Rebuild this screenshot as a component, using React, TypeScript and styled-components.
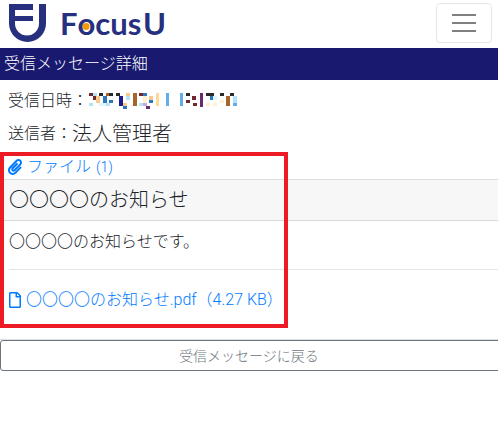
import React from "react";
import styled, { createGlobalStyle } from "styled-components";
import { FaPaperclip, FaRegFile } from "react-icons/fa";

const Global = createGlobalStyle`
  html, body { margin: 0; padding: 0; background: #fff; overflow: hidden; }
  body { font-family: Roboto, "Noto Sans CJK JP", sans-serif; font-weight: 300; font-size: 16px; line-height: 24px; color: #212529; }
`;
const Page = styled.div`position: relative; width: 498px; height: 427px; overflow: hidden;`;
const NavBar = styled.header`height: 48px; display: flex; align-items: flex-start; justify-content: space-between; padding: 3px 6px 0 9px; box-sizing: border-box;`;
const Brand = styled.div`display: flex; align-items: flex-start; gap: 14px;`;
const LogoMark = styled.svg`width: 37px; height: 40px; display: block;`;
const LogoText = styled.span`font-family: Lato, sans-serif; font-weight: 700; font-size: 31px; line-height: 40px; color: #26307f; word-spacing: -6px; white-space: nowrap;`;
const LogoO = styled.span`
  position: relative; display: inline-block;
  &::after { content: ""; position: absolute; width: 7px; height: 7px; border-radius: 50%; background: #f39800; left: 50%; top: 20px; transform: translateX(-50%); }
`;
const Toggler = styled.button`width: 56px; height: 40px; padding: 0; border: 1px solid #e6e6e6; border-radius: 4px; background: transparent; display: flex; flex-direction: column; align-items: center; justify-content: center; gap: 6px;`;
const Bar = styled.span`width: 24px; height: 2px; background: #808080;`;
const TitleBar = styled.h1`margin: 0 0 4px; height: 32px; background: #191970; color: #fff; font-size: 16px; font-weight: 300; line-height: 32px; padding-left: 4px;`;
const Meta = styled.div`display: flex; align-items: center; height: 33px; padding-left: 8px; white-space: nowrap;`;
const Large = styled.span`font-size: 20px;`;
const Mosaic = styled.svg`width: 150px; height: 20px; margin: 2px 0 0 1px; display: block; shape-rendering: crispEdges;`;
const AttachLink = styled.a`display: flex; align-items: center; height: 24px; padding-left: 8px; margin-top: 5px; color: #007bff; white-space: nowrap; svg { width: 14px; height: 16px; margin-right: 5px; }`;
const Count = styled.span`font-size: 14px; margin-left: 5px;`;
const Card = styled.section`width: 510px; border-top: 1px solid rgba(0,0,0,.125); border-bottom: 1px solid rgba(0,0,0,.125);`;
const CardHead = styled.div`height: 40px; background: #f7f7f7; border-bottom: 1px solid rgba(0,0,0,.125); padding-left: 9px; font-size: 20px; line-height: 40px;`;
const CardBody = styled.div`padding: 8px 9px 0; height: 118px; box-sizing: border-box;`;
const BodyText = styled.p`margin: 0; height: 40px; line-height: 26px;`;
const Rule = styled.hr`border: 0; border-top: 1px solid rgba(0,0,0,.1); margin: 0 0 18px;`;
const FileLink = styled.a`display: flex; align-items: center; color: #007bff; white-space: nowrap; svg { width: 12px; height: 16px; margin-right: 5px; }`;
const BackButton = styled.button`display: block; width: 510px; height: 31px; margin: 0; padding: 0 12px 0 0; border: 1px solid #6c757d; border-radius: 3px; background: #fff; color: #6c757d; font: inherit; font-size: 14px; text-align: center;`;
const Highlight = styled.div`position: absolute; left: 0; top: 152px; width: 288px; height: 176px; box-sizing: border-box; border: 4px solid #ed1c24; pointer-events: none;`;

const C = { dk: "#2b2b2b", mr: "#73262c", lb: "#b4e2f8", br: "#a8652a", pc: "#f8c88e", bl: "#2a78c0", nv: "#1c1c8c", cr: "#ffd898", sk: "#62aee8", pu: "#6a2a70", pl: "#fff0d0", pb: "#e0f4fc" };
const cells: [number, number, string][] = [
  [89,0,C.mr],[93,0,C.lb],[99,0,C.dk],[106,0,C.br],[109,0,C.dk],[116,0,C.dk],[126,0,C.pc],[133,0,C.br],[139,0,C.mr],[143,0,C.bl],[186,0,C.dk],[206,0,C.dk],[210,0,C.dk],[220,0,C.dk],[230,0,C.dk],
  [93,1,C.mr],[96,1,C.pc],[103,1,C.bl],[119,1,C.nv],[126,1,C.lb],[133,1,C.br],[143,1,C.pl],[149,1,C.pc],[192,1,C.mr],[210,1,C.bl],[213,1,C.pb],[226,1,C.br],[233,1,C.lb],
  [96,2,C.pc],[103,2,C.bl],[109,2,C.bl],[119,2,C.nv],[133,2,C.br],[143,2,C.pl],[149,2,C.bl],[186,2,C.mr],[220,2,C.pl],[226,2,C.br],[233,2,C.lb],
  [89,3,C.lb],[99,3,C.pb],[102,3,C.pb],[106,3,C.lb],[119,3,C.nv],[123,3,C.pc],[133,3,C.br],[139,3,C.lb],[143,3,"#c8a8d8"],[193,3,C.mr],[206,3,C.pl],[213,3,C.pl],[226,3,C.br],[233,3,C.sk],
  [123,4,C.bl],[146,4,C.pu],
];
const stripes: [number, string, number][] = [[156,C.cr,13],[166,C.sk,13],[180,C.sk,13],[200,C.pu,14]];

export default function App() {
  return (
    <Page>
      <Global />
      <NavBar>
        <Brand>
          <LogoMark viewBox="0 0 37 40">
            <path d="M0 1h24v6H6v6h18v5H6v2.5a12 12 0 0 0 24 0V1h7v19.5a18.5 18.5 0 0 1-37 0z" fill="#26307f" />
          </LogoMark>
          <LogoText>F<LogoO>o</LogoO>cus U</LogoText>
        </Brand>
        <Toggler aria-label="menu"><Bar /><Bar /><Bar /></Toggler>
      </NavBar>
      <TitleBar>受信メッセージ詳細</TitleBar>
      <Meta>受信日時：
        <Mosaic viewBox="89 0 150 20">
          {stripes.map(([x, c, h]) => <rect key={x} x={x} y={1} width={3} height={h} fill={c} />)}
          {cells.map(([x, r, c], i) => <rect key={i} x={x} y={1 + r * 3.25} width={4} height={3.25} fill={c} />)}
        </Mosaic>
      </Meta>
      <Meta>送信者：<Large>法人管理者</Large></Meta>
      <AttachLink><FaPaperclip />ファイル<Count>(1)</Count></AttachLink>
      <Card>
        <CardHead>〇〇〇〇のお知らせ</CardHead>
        <CardBody>
          <BodyText>〇〇〇〇のお知らせです。</BodyText>
          <Rule />
          <FileLink><FaRegFile />〇〇〇〇のお知らせ.pdf（4.27 KB）</FileLink>
        </CardBody>
      </Card>
      <BackButton>受信メッセージに戻る</BackButton>
      <Highlight />
    </Page>
  );
}
